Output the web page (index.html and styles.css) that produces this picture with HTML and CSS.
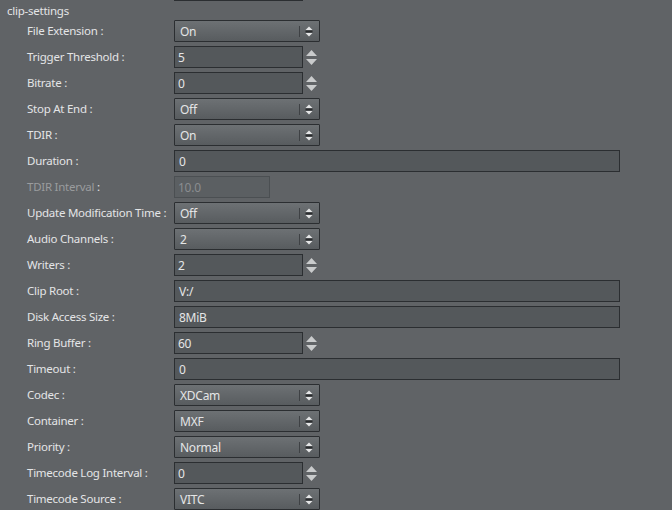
FILE: index.html
```html
<!DOCTYPE html>
<html>
<head>
<meta charset="utf-8">
<link rel="stylesheet" href="styles.css">
</head>
<body>
<div class="panel">
  <div class="stub-row"><div class="field spin-field stub"></div></div>
  <div class="group-title">clip-settings</div>
  <div class="rows">
    <div class="label">File Extension :</div>
    <div class="combo"><span class="val">On</span><span class="sep"></span><svg class="combo-ico" width="8" height="11" viewBox="0 0 8 11"><path d="M0.5 4 L4 0.5 L7.5 4Z" fill="#e4e5e6"/><rect x="0.5" y="4.5" width="7" height="2" fill="#2a2c2e"/><path d="M0.5 7 L4 10.5 L7.5 7Z" fill="#e4e5e6"/></svg></div>

    <div class="label">Trigger Threshold :</div>
    <div class="spin"><div class="field spin-field"><span class="val">5</span></div><svg class="spin-ico" width="13" height="17" viewBox="0 0 13 17"><path d="M1 7 L6.5 1 L12 7Z" fill="#c9cbcc"/><path d="M1 10 L6.5 16 L12 10Z" fill="#c9cbcc"/></svg></div>

    <div class="label">Bitrate :</div>
    <div class="spin"><div class="field spin-field"><span class="val">0</span></div><svg class="spin-ico" width="13" height="17" viewBox="0 0 13 17"><path d="M1 7 L6.5 1 L12 7Z" fill="#c9cbcc"/><path d="M1 10 L6.5 16 L12 10Z" fill="#c9cbcc"/></svg></div>

    <div class="label">Stop At End :</div>
    <div class="combo"><span class="val">Off</span><span class="sep"></span><svg class="combo-ico" width="8" height="11" viewBox="0 0 8 11"><path d="M0.5 4 L4 0.5 L7.5 4Z" fill="#e4e5e6"/><rect x="0.5" y="4.5" width="7" height="2" fill="#2a2c2e"/><path d="M0.5 7 L4 10.5 L7.5 7Z" fill="#e4e5e6"/></svg></div>

    <div class="label">TDIR :</div>
    <div class="combo"><span class="val">On</span><span class="sep"></span><svg class="combo-ico" width="8" height="11" viewBox="0 0 8 11"><path d="M0.5 4 L4 0.5 L7.5 4Z" fill="#e4e5e6"/><rect x="0.5" y="4.5" width="7" height="2" fill="#2a2c2e"/><path d="M0.5 7 L4 10.5 L7.5 7Z" fill="#e4e5e6"/></svg></div>

    <div class="label">Duration :</div>
    <div class="field wide-field"><span class="val">0</span></div>

    <div class="label"><span class="dim">TDIR Interval</span> :</div>
    <div class="field disabled-field"><span class="val">10.0</span></div>

    <div class="label">Update Modification Time :</div>
    <div class="combo"><span class="val">Off</span><span class="sep"></span><svg class="combo-ico" width="8" height="11" viewBox="0 0 8 11"><path d="M0.5 4 L4 0.5 L7.5 4Z" fill="#e4e5e6"/><rect x="0.5" y="4.5" width="7" height="2" fill="#2a2c2e"/><path d="M0.5 7 L4 10.5 L7.5 7Z" fill="#e4e5e6"/></svg></div>

    <div class="label">Audio Channels :</div>
    <div class="combo"><span class="val">2</span><span class="sep"></span><svg class="combo-ico" width="8" height="11" viewBox="0 0 8 11"><path d="M0.5 4 L4 0.5 L7.5 4Z" fill="#e4e5e6"/><rect x="0.5" y="4.5" width="7" height="2" fill="#2a2c2e"/><path d="M0.5 7 L4 10.5 L7.5 7Z" fill="#e4e5e6"/></svg></div>

    <div class="label">Writers :</div>
    <div class="spin"><div class="field spin-field"><span class="val">2</span></div><svg class="spin-ico" width="13" height="17" viewBox="0 0 13 17"><path d="M1 7 L6.5 1 L12 7Z" fill="#c9cbcc"/><path d="M1 10 L6.5 16 L12 10Z" fill="#c9cbcc"/></svg></div>

    <div class="label">Clip Root :</div>
    <div class="field wide-field"><span class="val">V:/</span></div>

    <div class="label">Disk Access Size :</div>
    <div class="field wide-field"><span class="val">8MiB</span></div>

    <div class="label">Ring Buffer :</div>
    <div class="spin"><div class="field spin-field"><span class="val">60</span></div><svg class="spin-ico" width="13" height="17" viewBox="0 0 13 17"><path d="M1 7 L6.5 1 L12 7Z" fill="#c9cbcc"/><path d="M1 10 L6.5 16 L12 10Z" fill="#c9cbcc"/></svg></div>

    <div class="label">Timeout :</div>
    <div class="field wide-field"><span class="val">0</span></div>

    <div class="label">Codec :</div>
    <div class="combo"><span class="val">XDCam</span><span class="sep"></span><svg class="combo-ico" width="8" height="11" viewBox="0 0 8 11"><path d="M0.5 4 L4 0.5 L7.5 4Z" fill="#e4e5e6"/><rect x="0.5" y="4.5" width="7" height="2" fill="#2a2c2e"/><path d="M0.5 7 L4 10.5 L7.5 7Z" fill="#e4e5e6"/></svg></div>

    <div class="label">Container :</div>
    <div class="combo"><span class="val">MXF</span><span class="sep"></span><svg class="combo-ico" width="8" height="11" viewBox="0 0 8 11"><path d="M0.5 4 L4 0.5 L7.5 4Z" fill="#e4e5e6"/><rect x="0.5" y="4.5" width="7" height="2" fill="#2a2c2e"/><path d="M0.5 7 L4 10.5 L7.5 7Z" fill="#e4e5e6"/></svg></div>

    <div class="label">Priority :</div>
    <div class="combo"><span class="val">Normal</span><span class="sep"></span><svg class="combo-ico" width="8" height="11" viewBox="0 0 8 11"><path d="M0.5 4 L4 0.5 L7.5 4Z" fill="#e4e5e6"/><rect x="0.5" y="4.5" width="7" height="2" fill="#2a2c2e"/><path d="M0.5 7 L4 10.5 L7.5 7Z" fill="#e4e5e6"/></svg></div>

    <div class="label">Timecode Log Interval :</div>
    <div class="spin"><div class="field spin-field"><span class="val">0</span></div><svg class="spin-ico" width="13" height="17" viewBox="0 0 13 17"><path d="M1 7 L6.5 1 L12 7Z" fill="#c9cbcc"/><path d="M1 10 L6.5 16 L12 10Z" fill="#c9cbcc"/></svg></div>

    <div class="label">Timecode Source :</div>
    <div class="combo"><span class="val">VITC</span><span class="sep"></span><svg class="combo-ico" width="8" height="11" viewBox="0 0 8 11"><path d="M0.5 4 L4 0.5 L7.5 4Z" fill="#e4e5e6"/><rect x="0.5" y="4.5" width="7" height="2" fill="#2a2c2e"/><path d="M0.5 7 L4 10.5 L7.5 7Z" fill="#e4e5e6"/></svg></div>
  </div>
</div>
</body>
</html>
```

FILE: styles.css
```css
html, body {
  margin: 0;
  padding: 0;
  background: #606366;
  overflow: hidden;
}
body {
  width: 672px;
  height: 510px;
  font-family: "Noto Sans", "Open Sans", sans-serif;
  font-size: 11.5px;
  letter-spacing: -0.25px;
  color: #e4e5e6;
}
.panel {
  display: flex;
  flex-direction: column;
}
.stub-row {
  margin-top: -21px;
  padding-left: 174px;
  height: 22px;
}
.group-title {
  height: 19px;
  line-height: 19px;
  padding-left: 7px;
}
.rows {
  display: grid;
  grid-template-columns: 147px auto;
  grid-auto-rows: 22px;
  row-gap: 4px;
  padding-left: 27px;
  justify-items: start;
  align-items: center;
}
.label {
  white-space: nowrap;
  line-height: 22px;
}
.dim {
  color: #9a9c9e;
}
.field {
  box-sizing: border-box;
  height: 22px;
  border: 1px solid #2b2e31;
  background: #54585b;
  display: flex;
  align-items: center;
  padding-left: 3px;
}
.val {
  font-size: 12px;
}
.spin-field {
  width: 129px;
}
.stub {
  height: 22px;
}
.wide-field {
  width: 446px;
  padding-left: 4px;
}
.disabled-field {
  width: 96px;
  background: #5b5f62;
  border-color: #4b4f52;
  color: #8a8d90;
  padding-left: 3px;
}
.spin {
  display: flex;
  align-items: center;
  height: 22px;
}
.spin-ico {
  margin-left: 2px;
  display: block;
}
.combo {
  box-sizing: border-box;
  width: 146px;
  height: 22px;
  border: 1px solid #2b2e31;
  border-radius: 1px;
  background: linear-gradient(#6d7174, #585c5f);
  display: flex;
  align-items: center;
  padding-left: 5px;
  padding-right: 6px;
}
.combo .val {
  flex: 1;
}
.sep {
  width: 1px;
  height: 11px;
  background: #3e4144;
  margin-right: 5px;
}
.combo-ico {
  display: block;
}
```
